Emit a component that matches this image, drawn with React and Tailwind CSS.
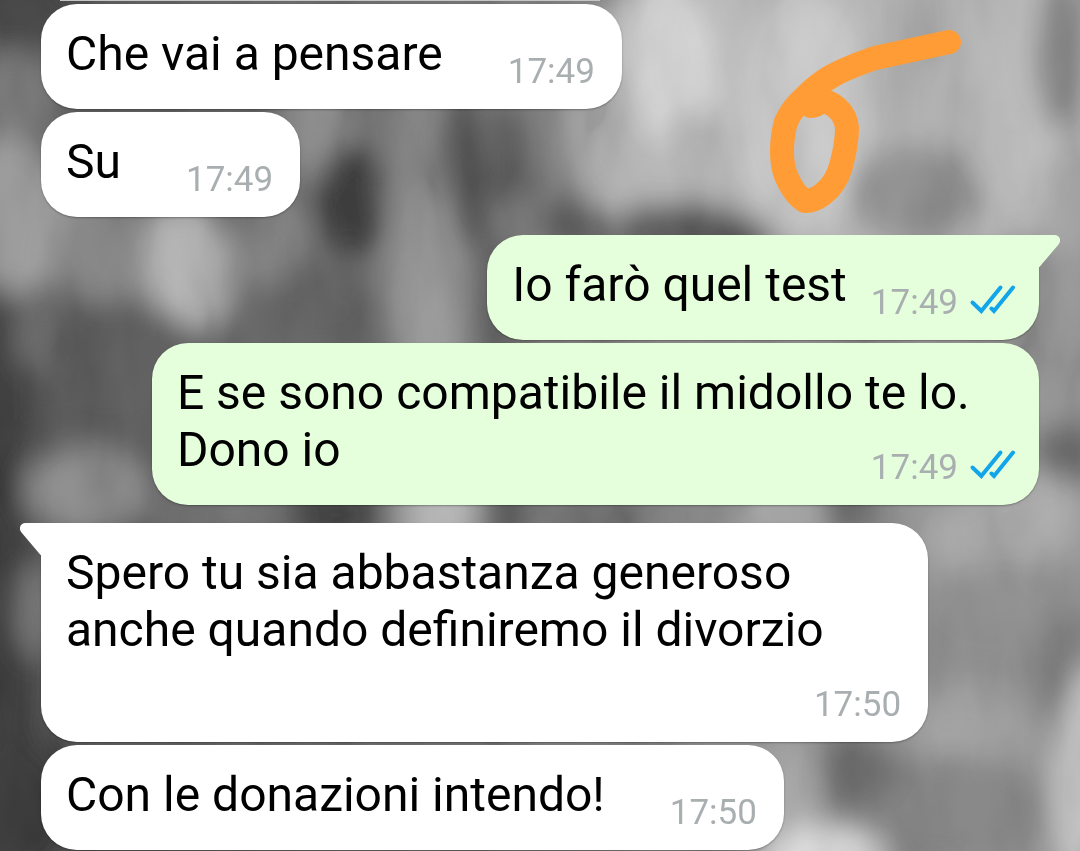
// conversation view: wallpaper, message bubbles and the marker drawn over it

const INCOMING = "in";
const OUTGOING = "out";

const messages = [
  { id: 1, from: INCOMING, text: "Che vai a pensare", time: "17:49" },
  { id: 2, from: INCOMING, text: "Su", time: "17:49" },
  { id: 3, from: OUTGOING, text: "Io farò quel test", time: "17:49", first: true },
  { id: 4, from: OUTGOING, text: "E se sono compatibile il midollo te lo. Dono io", time: "17:49" },
  {
    id: 5,
    from: INCOMING,
    text: "Spero tu sia abbastanza generoso anche quando definiremo il divorzio",
    time: "17:50",
    first: true,
  },
  { id: 6, from: INCOMING, text: "Con le donazioni intendo!", time: "17:50" },
];

// [cx, cy, rx, ry, fill, rotation]
const patches = [
  [870, 90, 300, 175, "#b4b4b4", 0],
  [20, 10, 60, 40, "#383838", 0],
  [10, 100, 55, 50, "#727272", 0],
  [15, 215, 60, 80, "#969696", -8],
  [110, 250, 60, 60, "#808080", 0],
  [190, 268, 46, 68, "#b0b0b0", -12],
  [320, 130, 40, 60, "#8a8a8a", -10],
  [352, 200, 38, 56, "#303030", 0],
  [280, 245, 36, 50, "#7c7c7c", 0],
  [320, 310, 60, 44, "#565656", 0],
  [424, 170, 40, 100, "#7e7e7e", 0],
  [428, 290, 44, 110, "#929292", 0],
  [464, 170, 15, 90, "#2e2e2e", -6],
  [508, 160, 30, 56, "#565656", 0],
  [490, 290, 24, 70, "#555555", 0],
  [510, 220, 24, 24, "#707070", 0],
  [550, 150, 20, 70, "#767676", -8],
  [572, 222, 30, 26, "#4c4c4c", 0],
  [620, 150, 50, 82, "#aeaeae", -14],
  [672, 70, 46, 90, "#d2d2d2", -6],
  [700, 160, 34, 50, "#b0b0b0", -20],
  [680, 228, 70, 26, "#4c4c4c", 0],
  [742, 242, 30, 26, "#404040", 0],
  [805, 110, 66, 120, "#cacaca", 0],
  [925, 20, 18, 50, "#9c9c9c", 0],
  [905, 100, 28, 50, "#a8a8a8", 0],
  [915, 195, 66, 52, "#8a8a8a", 0],
  [1015, 160, 42, 48, "#b8b8b8", 0],
  [1062, 50, 26, 80, "#7c7c7c", 0],
  [1068, 200, 24, 60, "#a0a0a0", 0],
  [1062, 350, 30, 80, "#969696", 0],
  [1068, 460, 34, 40, "#606060", 0],
  [110, 370, 100, 70, "#545454", 0],
  [4, 430, 34, 140, "#303030", 0],
  [40, 335, 24, 40, "#626262", 0],
  [90, 490, 65, 44, "#868686", 0],
  [240, 515, 90, 18, "#6a6a6a", 0],
  [335, 515, 46, 26, "#333333", 0],
  [438, 514, 42, 50, "#b0b0b0", 0],
  [505, 514, 26, 30, "#4a4a4a", 0],
  [600, 514, 60, 26, "#707070", 0],
  [780, 514, 44, 30, "#a6a6a6", 0],
  [850, 508, 26, 26, "#565656", 0],
  [1000, 530, 90, 50, "#a4a4a4", -20],
  [1000, 620, 100, 60, "#8a8a8a", 0],
  [1062, 670, 30, 60, "#727272", 0],
  [960, 725, 60, 45, "#9c9c9c", 0],
  [940, 810, 120, 55, "#7c7c7c", 0],
  [850, 770, 40, 36, "#606060", 0],
  [796, 790, 24, 60, "#a6a6a6", 0],
  [820, 856, 62, 30, "#dcdcdc", 0],
  [1084, 770, 30, 110, "#c4c4c4", 6],
  [8, 650, 32, 170, "#2e2e2e", 0],
  [36, 610, 18, 50, "#6e6e6e", 0],
  [15, 810, 60, 70, "#303030", 0],
];

function Wallpaper() {
  return (
    <svg
      className="absolute inset-0 h-full w-full"
      viewBox="0 0 1080 851"
      preserveAspectRatio="none"
      aria-hidden="true"
    >
      <defs>
        <linearGradient id="base" x1="0" x2="1" y1="0" y2="0">
          <stop offset="0" stopColor="#4a4a4a" />
          <stop offset="0.45" stopColor="#6e6e6e" />
          <stop offset="0.7" stopColor="#8c8c8c" />
          <stop offset="1" stopColor="#909090" />
        </linearGradient>
        <filter id="soft" x="-100" y="-100" width="1280" height="1051" filterUnits="userSpaceOnUse">
          <feGaussianBlur stdDeviation="14" />
        </filter>
        <filter id="streaks" x="0" y="0" width="1080" height="851" filterUnits="userSpaceOnUse">
          <feTurbulence type="fractalNoise" baseFrequency="0.016 0.007" numOctaves="3" seed="7" />
          <feColorMatrix values="1.6 0 0 0 -0.3  1.6 0 0 0 -0.3  1.6 0 0 0 -0.3  0 0 0 0 1" />
        </filter>
      </defs>
      <rect width="1080" height="851" fill="url(#base)" />
      <g filter="url(#soft)">
        {patches.map(([cx, cy, rx, ry, fill, angle]) => (
          <ellipse
            key={`${cx}-${cy}`}
            cx={cx}
            cy={cy}
            rx={rx}
            ry={ry}
            fill={fill}
            transform={`rotate(${angle} ${cx} ${cy})`}
          />
        ))}
      </g>
      <rect width="1080" height="851" filter="url(#streaks)" opacity="0.1" />
    </svg>
  );
}

function ReadTicks() {
  return (
    <svg className="h-8 w-[46px]" viewBox="0 0 46 32" fill="none" role="img" aria-label="Read">
      <g stroke="#12a5ea" strokeWidth="4" strokeLinecap="round" strokeLinejoin="miter">
        <path d="M3.500 20.500 12.300 29 31.500 5.500" />
        <path d="M22.500 26.500 25 29 44 5.500" />
      </g>
    </svg>
  );
}

function Tail({ side }) {
  return (
    <svg
      className={
        side === OUTGOING
          ? "absolute top-0 left-full h-8 w-[21px] text-[#e5ffdc]"
          : "absolute top-0 right-full h-8 w-[21px] -scale-x-100 text-white"
      }
      viewBox="0 0 21 32"
      aria-hidden="true"
    >
      <path d="M-1 0H15.500C20.500 0 23 5.500 19.500 9.500L0 32.500H-1Z" fill="currentColor" />
    </svg>
  );
}

function Message({ message }) {
  const { from, text, time, first } = message;
  const outgoing = from === OUTGOING;

  let corners = "rounded-[36px]";
  if (first) corners = outgoing ? "rounded-[36px] rounded-tr-none" : "rounded-[36px] rounded-tl-none";

  return (
    <li
      className={`relative max-w-8/9 pt-[21px] pb-4 pl-[25px] shadow-[0_1px_2px_rgba(0,0,0,0.3)] ${corners} ${
        outgoing ? "self-end bg-[#e5ffdc] pr-6" : "self-start bg-white pr-[27px]"
      } ${first ? "mt-[15px]" : ""}`}
    >
      {first && <Tail side={from} />}
      {/* the time floats, so it shares the last line when there is room for it */}
      <div className="flow-root text-[48px] leading-[57px] text-black">
        {text}
        <div className={`float-right mt-[26px] flex gap-[11px] ${outgoing ? "ml-6" : "ml-[65px]"}`}>
          <time className="text-[35px] leading-[42px] text-[#a9afb1]">{time}</time>
          {outgoing && <ReadTicks />}
        </div>
      </div>
    </li>
  );
}

function Marker() {
  return (
    <svg
      className="absolute top-[30px] right-[118px] h-[184px] w-[193px]"
      viewBox="769 30 193 184"
      fill="none"
      aria-hidden="true"
    >
      <path
        d="M949 42 L912 50 L875 58 Q846 68 832 76 Q818 84 806 96 Q792 108 786 122 Q782 136 782 152 Q782 170 789 182 Q796 196 805 201 Q814 201 823 194 Q836 184 841 166 Q847 144 847 128 Q846 116 837 108 Q829 101 821 101 Q816 106 811 106"
        stroke="#ff9c35"
        strokeWidth="24"
        strokeLinecap="round"
        strokeLinejoin="round"
      />
    </svg>
  );
}

export default function App() {
  return (
    <main className="relative min-h-screen overflow-hidden bg-[#6e6e6e] font-[Roboto,sans-serif]">
      <Wallpaper />
      {/* lower edge of the message scrolled out above */}
      <div className="relative mr-[480px] ml-[60px] h-px bg-[#c4c6c4]" />
      <ul className="relative flex flex-col gap-[3px] px-[41px] pt-[3px]">
        {messages.map((message) => (
          <Message key={message.id} message={message} />
        ))}
      </ul>
      <Marker />
    </main>
  );
}
